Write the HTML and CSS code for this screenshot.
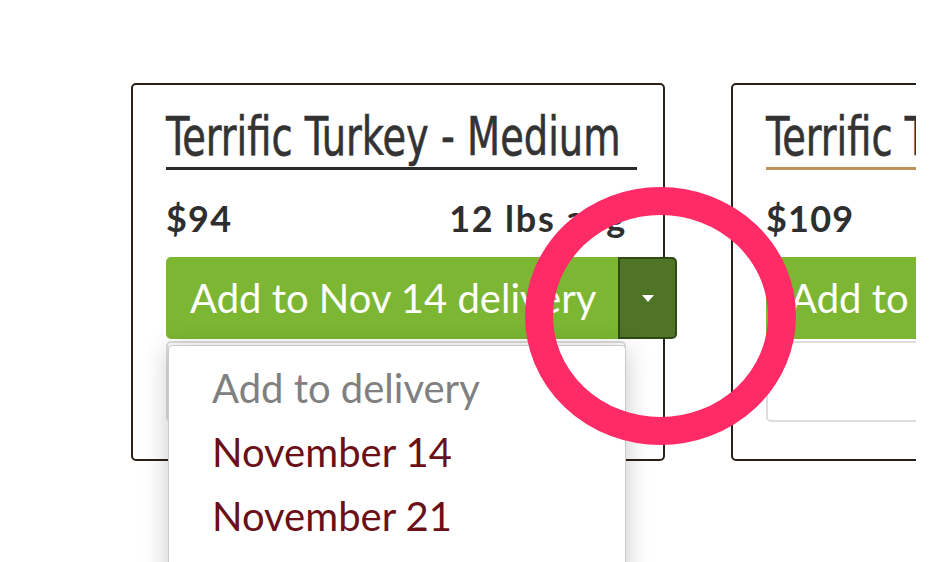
FILE: index.html
```html
<!DOCTYPE html>
<html>
<head>
<meta charset="utf-8">
<link rel="stylesheet" href="styles.css">
</head>
<body>
<div class="stage">
  <div class="row">
    <div class="card">
      <h2 class="title"><span class="title-text">Terrific Turkey - Medium</span></h2>
      <div class="meta">
        <span class="price">$94</span>
        <span class="weight">12 lbs avg</span>
      </div>
      <div class="btn-group">
        <button class="btn-main">Add to Nov 14 delivery</button>
        <button class="btn-toggle"><span class="caret"></span></button>
      </div>
      <div class="select-box"></div>
      <div class="menu">
        <div class="menu-item menu-head">Add to delivery</div>
        <div class="menu-item">November 14</div>
        <div class="menu-item">November 21</div>
      </div>
    </div>
    <div class="card card-alt">
      <h2 class="title"><span class="title-text">Terrific Turkey - Large</span></h2>
      <div class="meta">
        <span class="price">$109</span>
        <span class="weight">16 lbs avg</span>
      </div>
      <div class="btn-group">
        <button class="btn-main">Add to Nov 14 delivery</button>
        <button class="btn-toggle"><span class="caret"></span></button>
      </div>
      <div class="select-box"></div>
    </div>
  </div>
  <svg class="ring" width="936" height="562" viewBox="0 0 936 562">
    <ellipse cx="660.5" cy="316" rx="121.5" ry="115" fill="none" stroke="#fe2b67" stroke-width="28"/>
  </svg>
</div>
</body>
</html>
```
FILE: styles.css
```css
* { box-sizing: border-box; }
html, body { margin: 0; padding: 0; background: #fff; }
body { width: 936px; height: 562px; overflow: hidden; font-family: Lato, "Noto Sans", sans-serif; color: #333; }
.stage { position: relative; width: 936px; height: 562px; }
.row {
  width: 916px;
  overflow: hidden;
  display: flex;
  gap: 66px;
  padding: 83px 0 0 131px;
  height: 562px;
}
.card {
  position: relative;
  flex: 0 0 534px;
  width: 534px;
  height: 378px;
  border: 2px solid #2a2018;
  border-radius: 5px;
  padding: 20px 26px 0 33px;
}
.title {
  margin: 0;
  height: 65px;
  padding-top: 1px;
  border-bottom: 3px solid #2b2b2b;
  font-family: "DejaVu Sans Condensed", "Liberation Sans", sans-serif;
  font-weight: 400;
  font-size: 54px;
  line-height: 62px;
  white-space: nowrap;
  color: #333;
}
.card-alt .title { border-bottom-color: #c0925b; }
.title-text { display: inline-block; transform: scaleX(0.79); transform-origin: 0 50%; -webkit-text-stroke: 0.6px #333; }
.meta {
  margin-top: 28px;
  margin-right: 10px;
  height: 40px;
  display: flex;
  justify-content: space-between;
  font-size: 36px;
  line-height: 40px;
  font-weight: 700;
  color: #2e2e2e;
  white-space: nowrap;
}
.price { letter-spacing: 1.2px; }
.weight { letter-spacing: 1.8px; }
.btn-group {
  margin-top: 19px;
  display: flex;
  width: 511px;
  height: 82px;
}
.btn-main {
  flex: 0 0 452px;
  height: 82px;
  border: 0;
  border-radius: 5px 0 0 5px;
  background: #7cb632;
  color: #fff;
  font-family: Lato, "Noto Sans", sans-serif;
  font-size: 40px;
  line-height: 80px;
  text-align: left;
  padding: 0 0 0 24px;
  white-space: nowrap;
  overflow: hidden;
}
.btn-toggle {
  flex: 0 0 59px;
  height: 82px;
  border: 2px solid #2f4a17;
  border-radius: 0 5px 5px 0;
  background: #4f7426;
  padding: 0;
  display: flex;
  align-items: center;
  justify-content: center;
}
.caret {
  width: 0; height: 0;
  border-left: 6px solid transparent;
  border-right: 6px solid transparent;
  border-top: 7px solid #fff;
}
.select-box {
  margin-top: 2px;
  width: 460px;
  height: 81px;
  border: 2px solid #ddd;
  border-radius: 5px;
  background: #fff;
}
.menu {
  position: absolute;
  left: 35px;
  top: 260px;
  width: 458px;
  height: 240px;
  background: #fff;
  border: 1px solid #c9c9c9;
  border-radius: 4px;
  box-shadow: 0 4px 26px rgba(0,0,0,0.22);
  padding: 10px 0 0 43px;
  z-index: 2;
}
.menu-item {
  font-size: 40px;
  line-height: 64px;
  color: #6a1016;
  white-space: nowrap;
}
.menu-head { color: #808080; }
.ring { position: absolute; left: 0; top: 0; pointer-events: none; z-index: 5; }
```
